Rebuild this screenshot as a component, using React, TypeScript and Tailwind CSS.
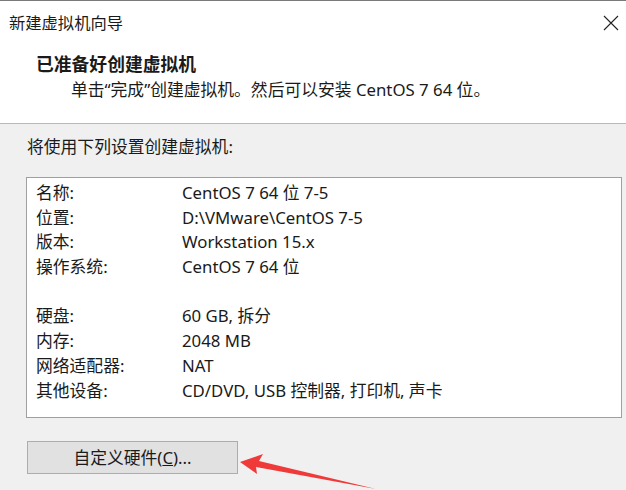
import React from 'react';

const rows: [string, string][] = [
  ['名称:', 'CentOS 7 64 位 7-5'],
  ['位置:', 'D:\\VMware\\CentOS 7-5'],
  ['版本:', 'Workstation 15.x'],
  ['操作系统:', 'CentOS 7 64 位'],
  ['', ''],
  ['硬盘:', '60 GB, 拆分'],
  ['内存:', '2048 MB'],
  ['网络适配器:', 'NAT'],
  ['其他设备:', 'CD/DVD, USB 控制器, 打印机, 声卡'],
];

const font = { fontFamily: '"Noto Sans", "Noto Sans CJK SC", sans-serif' };

export default function App() {
  return (
    <div
      className="relative w-[626px] h-[490px] overflow-hidden bg-[#f0f0f0] text-[#1a1a1a] text-[16.8px]"
      style={font}
    >
      <div className="h-[124px] bg-white border-t border-[#7a7a7a] border-b border-b-[#b9b9b9] flex flex-col">
        <div className="h-[43px] flex items-center justify-between pl-[9px] pr-[4px]">
          <span className="leading-6 text-[16.3px]">新建虚拟机向导</span>
          <svg width="16" height="16" viewBox="0 0 16 16" className="mr-[3px]">
            <path d="M1 1 L15 15 M15 1 L1 15" stroke="#222" strokeWidth="1.1" fill="none" />
          </svg>
        </div>
        <div className="mt-[8px] pl-[36px] font-bold leading-6 text-[17.8px]">已准备好创建虚拟机</div>
        <div className="mt-[2px] pl-[71px] leading-6">单击“完成”创建虚拟机。然后可以安装 CentOS 7 64 位。</div>
      </div>

      <div className="pt-[11px] pl-[27px] leading-6">将使用下列设置创建虚拟机:</div>

      <div className="mt-[18px] ml-[26px] w-[596px] h-[241px] bg-white border border-[#a0a0a0] pt-[2px]">
        {rows.map(([label, value], i) => (
          <div key={i} className="grid grid-cols-[155px_1fr] h-[24.7px] items-center">
            <span className="pl-[9px]">{label}</span>
            <span>{value}</span>
          </div>
        ))}
      </div>

      <button className="mt-[23px] ml-[27px] w-[211px] h-[33px] bg-[#e1e1e1] border border-[#adadad] flex items-center justify-center">
        自定义硬件(<span className="underline">C</span>)...
      </button>

      <svg className="absolute left-0 top-0 pointer-events-none" width="626" height="490" viewBox="0 0 626 490">
        <polygon
          points="240,462 263,454 259,461 376,489 256,467 257,474"
          fill="#f03a3a"
        />
      </svg>
    </div>
  );
}
